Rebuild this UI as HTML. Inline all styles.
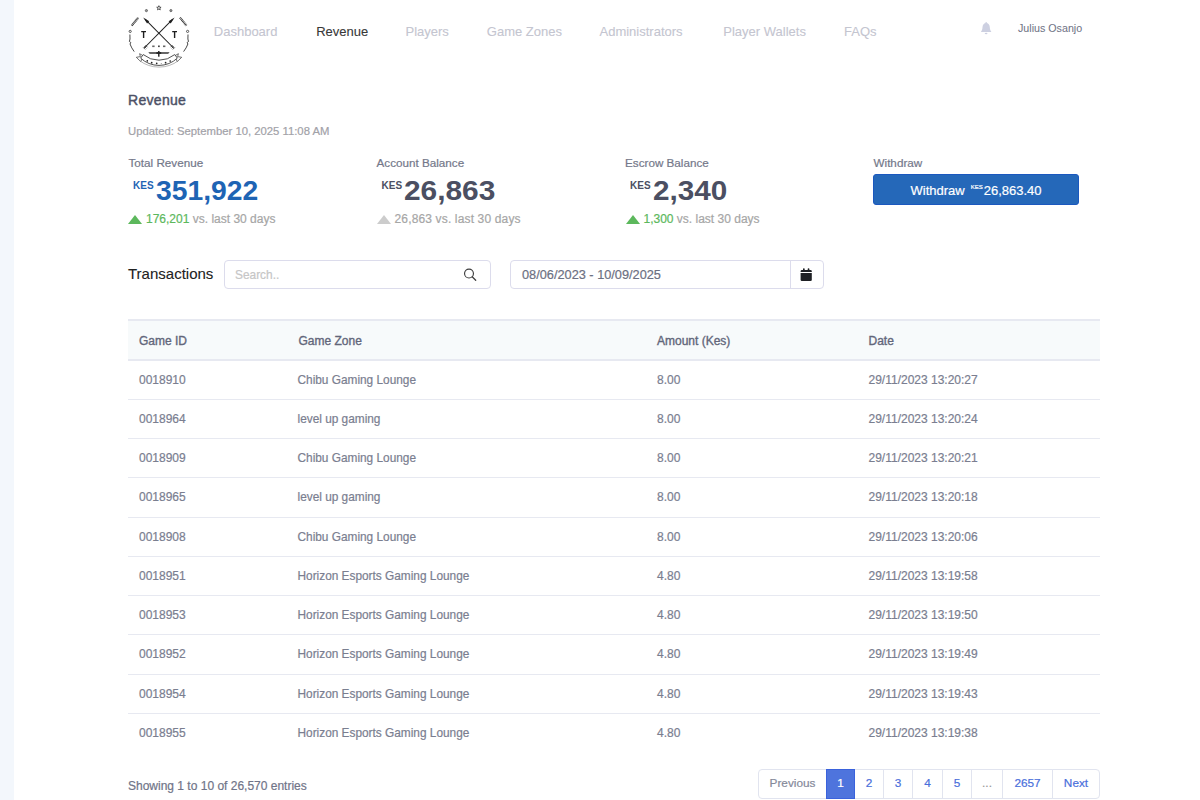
<!DOCTYPE html>
<html><head><meta charset="utf-8">
<style>
*{margin:0;padding:0;box-sizing:border-box}
html,body{width:1200px;height:800px;overflow:hidden;background:#fff;font-family:"Liberation Sans",sans-serif}
body{-webkit-text-stroke:0.2px currentColor}
.val{-webkit-text-stroke:0}
.abs{position:absolute;white-space:nowrap}
#strip{position:absolute;left:0;top:0;width:14px;height:800px;background:#f3f7fc}
.nav{font-size:13px;color:#c4c5d0;top:22.6px;line-height:18px;-webkit-text-stroke:0.1px currentColor}
.nav.on{color:#383838}
#user{-webkit-text-stroke:0.05px currentColor;font-size:10.7px;color:#707486;top:21px;left:1018px;line-height:14px}
h1{position:absolute;left:128px;top:90.8px;font-size:14px;letter-spacing:0.3px;font-weight:normal;-webkit-text-stroke:0.45px currentColor;color:#4d5166;line-height:18px}
#upd{left:128px;top:124px;font-size:11.3px;color:#a2a2a8;line-height:14px}
.lbl{font-size:11.7px;color:#74788a;top:156px;line-height:14px}
.val{top:173.5px;line-height:34px;font-weight:bold;color:#4b4f62;font-size:27px}
.num{display:inline-block;transform-origin:0 50%}
.val sup{font-size:10px;letter-spacing:0;vertical-align:top;position:relative;top:-4.5px;margin-right:2px}
.blue{color:#1e64b4}
.chg{top:211px;font-size:12px;line-height:16px;color:#a6a6a6}
.chg .g{color:#5cb85c}
.tri{display:inline-block;width:0;height:0;border-left:7px solid transparent;border-right:7px solid transparent;border-bottom:9px solid #5cb85c;margin-right:4px;vertical-align:-1px}
.tri.gr{border-bottom-color:#cccccc}
#btn{position:absolute;left:873px;top:174.2px;width:206px;height:31px;background:#2568b9;border:1px solid #1b58bf;border-radius:3px;color:#fff;font-size:13px;line-height:29px;padding-top:1px;text-align:center}
#btn small{font-size:6px;vertical-align:top;position:relative;top:-3px;margin:0 1px 0 6px}
#trans{left:128px;top:265px;font-size:15px;color:#222;line-height:18px;-webkit-text-stroke:0.1px currentColor}
.inp{position:absolute;top:260px;height:29px;border:1px solid #dcdcec;border-radius:4px;background:#fff}
#search{left:224px;width:267px}
#search span{position:absolute;left:10px;top:6px;font-size:11.9px;color:#c6c6c6;line-height:16px}
#date{left:510px;width:314px}
#date span{position:absolute;left:11px;top:6px;font-size:12.75px;color:#6c7082;line-height:16px}
#date .sep{position:absolute;left:279px;top:0;width:1px;height:27px;background:#dcdcec}
table{position:absolute;left:128px;top:319px;width:972px;border-collapse:collapse;font-size:12px}
th{background:#f7fafb;color:#62667a;font-weight:normal;-webkit-text-stroke:0.35px currentColor;text-align:left;height:40px;padding:1px 0 0 11px;border-top:2px solid #e7e9f1;border-bottom:2px solid #e7e9f1;font-size:12px}
td{color:#7a7e90;height:39.25px;padding:0 0 0 11px;border-bottom:1px solid #e7e9f1}
tr:last-child td{border-bottom:1px solid transparent}
td:nth-child(2){padding-left:10px;font-size:11.85px}
#show{left:128px;top:778px;font-size:12px;color:#707488;line-height:16px}
.pg{position:absolute;top:769px;height:30px;border:1px solid #e1e4ef;text-align:center;line-height:27px;font-size:11.8px;color:#4a6fdb;background:#fff}
.pg.prev{color:#858a9a;border-radius:4px 0 0 4px}
.pg.nxt{border-radius:0 4px 4px 0}
.pg.dots{color:#999}
.pg.act{background:#4e74dd;border-color:#3a62dc;color:#fff;z-index:2}
</style></head><body>
<div id="strip"></div>

<svg class="abs" style="left:125px;top:2px" width="70" height="70" viewBox="0 0 70 70">
 <g stroke="#1e1e1e" fill="none" stroke-width="1.05">
  <line x1="20" y1="17.2" x2="48.6" y2="46"/>
  <line x1="47.8" y1="17.2" x2="19.2" y2="46"/>
 </g>
 <g fill="#1e1e1e">
  <path d="M18.2 15.4 L24.2 19.3 L22.1 21.4 Z"/>
  <path d="M49.6 15.4 L43.6 19.3 L45.7 21.4 Z"/>
  <path d="M16.2 28.9 H21 V30.2 H19.3 V35.9 H17.9 V30.2 H16.2 Z"/>
  <path d="M47.2 28.9 H52 V30.2 H50.3 V35.9 H48.9 V30.2 H47.2 Z"/>
  <rect x="27.2" y="43.5" width="2.4" height="1.6" fill="#666"/>
  <rect x="33.1" y="43.5" width="1.6" height="1.6" fill="#333"/>
  <rect x="38" y="43.5" width="2.4" height="1.6" fill="#666"/>
  <path d="M23.3 50.1 L44.6 50.1 L43.2 52 L24.7 52 Z" fill="#666"/>
  <rect x="33.1" y="49" width="1.4" height="5.7"/>
  <rect x="31.4" y="50.2" width="4.8" height="1.6"/>
 </g>
 <g fill="none" stroke="#333">
  <path d="M33.90 3.70 L34.49 5.19 L36.09 5.29 L34.85 6.31 L35.25 7.86 L33.90 7.00 L32.55 7.86 L32.95 6.31 L31.71 5.29 L33.31 5.19 Z" stroke-width="0.8" stroke="#333" fill="#fff"/>
  <circle cx="21.4" cy="8.6" r="1.1" stroke="#555" stroke-width="0.8" fill="#999"/>
  <circle cx="45.9" cy="8.6" r="1.1" stroke="#555" stroke-width="0.8" fill="#999"/>
  <path d="M20.40 43.20 L22.40 45.20 M19.30 44.30 L21.30 46.30 M18.20 45.40 L20.20 47.40" stroke-width="0.75" stroke="#222"/>
  <path d="M45.60 45.20 L47.60 43.20 M46.70 46.30 L48.70 44.30 M47.80 47.40 L49.80 45.40" stroke-width="0.75" stroke="#222"/>
  <path d="M6.8 23.6 L13.2 15.6" stroke-width="2.2" stroke-dasharray="0.9 0.5" stroke="#333"/>
  <path d="M55 15.6 L61.4 23.6" stroke-width="2.2" stroke-dasharray="0.9 0.5" stroke="#333"/>
  <circle cx="5.2" cy="29.4" r="1.1" stroke-width="0.8"/>
  <circle cx="62.6" cy="29.4" r="1.1" stroke-width="0.8"/>
  <path d="M4.9 32.5 L5 37 L4.4 39.5 L5.8 40.5 L5 42 Q 6.5 46 9.2 49.6" stroke-width="0.9"/>
  <path d="M63 32.5 L62.9 37 L63.5 39.5 L62.1 40.5 L62.9 42 Q 61.4 46 58.6 49.6" stroke-width="0.9"/>
 </g>
 <g stroke="#333" stroke-width="0.85" fill="#fff">
  <path d="M17.6 53.4 L14.6 51.7 L15.4 54.6 L11.3 55.3 L15.8 59.7 L16.6 57.6 Z" stroke-width="0.7"/>
  <path d="M50.4 53.4 L53.4 51.7 L52.6 54.6 L56.7 55.3 L52.2 59.7 L51.4 57.6 Z" stroke-width="0.7"/>
  <path d="M18.3 52.6 A24.8 24.8 0 0 0 49.7 52.6 L52.4 56.1 A26.8 26.8 0 0 1 15.6 56.1 Z"/>
  <path d="M14.5 58.6 A32.5 32.5 0 0 0 53.5 58.6" fill="none" stroke-width="0.7" stroke="#999"/>
 </g>
 <g fill="#222">
  <circle cx="22.3" cy="58.8" r="0.85"/>
  <circle cx="26.7" cy="60.7" r="0.85"/>
  <circle cx="31.7" cy="61.3" r="0.85"/>
  <circle cx="36.25" cy="61.5" r="0.5" fill="#777"/>
  <circle cx="40.6" cy="60.7" r="0.85"/>
  <circle cx="45.2" cy="59" r="0.85"/>
 </g>
</svg>

<div class="abs nav" style="left:213.8px">Dashboard</div>
<div class="abs nav on" style="left:316.2px">Revenue</div>
<div class="abs nav" style="left:405.5px">Players</div>
<div class="abs nav" style="left:486.8px">Game Zones</div>
<div class="abs nav" style="left:599.5px">Administrators</div>
<div class="abs nav" style="left:723.3px">Player Wallets</div>
<div class="abs nav" style="left:844px">FAQs</div>

<svg class="abs" style="left:980px;top:22px" width="13" height="14" viewBox="0 0 13 14">
 <path d="M6.15 0.9 C4 0.9 2.6 2.7 2.5 5.2 C2.4 7.4 1.9 8.5 1.1 9.5 L1.1 10.1 L11.2 10.1 L11.2 9.5 C10.4 8.5 9.9 7.4 9.8 5.2 C9.7 2.7 8.3 0.9 6.15 0.9 Z" fill="#cdd0e1"/>
 <circle cx="6.15" cy="0.9" r="0.8" fill="#cdd0e1"/>
 <ellipse cx="6.1" cy="11.4" rx="1.4" ry="0.75" fill="#cdd0e1"/>
</svg>
<div class="abs" id="user">Julius Osanjo</div>

<h1>Revenue</h1>
<div class="abs" id="upd">Updated: September 10, 2025 11:08 AM</div>

<div class="abs lbl" style="left:128.5px">Total Revenue</div>
<div class="abs val blue" style="left:133px"><sup>KES</sup><span class="num" style="transform:scaleX(1.047)">351,922</span></div>
<div class="abs chg" style="left:128px"><span class="tri"></span><span class="g">176,201</span> vs. last 30 days</div>

<div class="abs lbl" style="left:376.5px">Account Balance</div>
<div class="abs val" style="left:381.5px"><sup>KES</sup><span class="num" style="transform:scaleX(1.106)">26,863</span></div>
<div class="abs chg" style="left:376.5px;letter-spacing:0.15px"><span class="tri gr"></span>26,863 vs. last 30 days</div>

<div class="abs lbl" style="left:625px">Escrow Balance</div>
<div class="abs val" style="left:630px"><sup>KES</sup><span class="num" style="transform:scaleX(1.10)">2,340</span></div>
<div class="abs chg" style="left:625.5px"><span class="tri"></span><span class="g">1,300</span> vs. last 30 days</div>

<div class="abs lbl" style="left:873.5px">Withdraw</div>
<div id="btn">Withdraw<small>KES</small>26,863.40</div>

<div class="abs" id="trans">Transactions</div>
<div class="inp" id="search"><span>Search..</span>
 <svg style="position:absolute;left:239px;top:7px" width="14" height="14" viewBox="0 0 14 14"><circle cx="5.0" cy="5.5" r="4.45" fill="none" stroke="#3f3f3f" stroke-width="1.15"/><line x1="8.2" y1="8.7" x2="11.7" y2="12.2" stroke="#3f3f3f" stroke-width="1.3" stroke-linecap="round"/></svg>
</div>
<div class="inp" id="date"><span>08/06/2023 - 10/09/2025</span><div class="sep"></div>
 <svg style="position:absolute;left:289px;top:7px" width="13" height="14" viewBox="0 0 13 14"><path d="M0.6 3.3 Q0.6 2 1.9 2 H10.5 Q11.8 2 11.8 3.3 V4 H0.6 Z" fill="#1e2024"/><rect x="3" y="0.2" width="1.7" height="2.8" rx="0.8" fill="#1e2024"/><rect x="7.7" y="0.2" width="1.7" height="2.8" rx="0.8" fill="#1e2024"/><path d="M0.6 5.1 H11.8 V11.8 Q11.8 13 10.6 13 H1.8 Q0.6 13 0.6 11.8 Z" fill="#1e2024"/></svg>
</div>

<table>
<colgroup><col style="width:159.5px"><col style="width:358.5px"><col style="width:211.5px"><col style="width:242.5px"></colgroup>
<thead><tr><th>Game ID</th><th>Game Zone</th><th>Amount (Kes)</th><th>Date</th></tr></thead>
<tbody>
<tr><td>0018910</td><td>Chibu Gaming Lounge</td><td>8.00</td><td>29/11/2023 13:20:27</td></tr>
<tr><td>0018964</td><td>level up gaming</td><td>8.00</td><td>29/11/2023 13:20:24</td></tr>
<tr><td>0018909</td><td>Chibu Gaming Lounge</td><td>8.00</td><td>29/11/2023 13:20:21</td></tr>
<tr><td>0018965</td><td>level up gaming</td><td>8.00</td><td>29/11/2023 13:20:18</td></tr>
<tr><td>0018908</td><td>Chibu Gaming Lounge</td><td>8.00</td><td>29/11/2023 13:20:06</td></tr>
<tr><td>0018951</td><td>Horizon Esports Gaming Lounge</td><td>4.80</td><td>29/11/2023 13:19:58</td></tr>
<tr><td>0018953</td><td>Horizon Esports Gaming Lounge</td><td>4.80</td><td>29/11/2023 13:19:50</td></tr>
<tr><td>0018952</td><td>Horizon Esports Gaming Lounge</td><td>4.80</td><td>29/11/2023 13:19:49</td></tr>
<tr><td>0018954</td><td>Horizon Esports Gaming Lounge</td><td>4.80</td><td>29/11/2023 13:19:43</td></tr>
<tr><td>0018955</td><td>Horizon Esports Gaming Lounge</td><td>4.80</td><td>29/11/2023 13:19:38</td></tr>
</tbody></table>

<div class="abs" id="show">Showing 1 to 10 of 26,570 entries</div>
<div class="pg prev" style="left:758px;width:69px">Previous</div>
<div class="pg act" style="left:826px;width:29px">1</div>
<div class="pg" style="left:854px;width:30px">2</div>
<div class="pg" style="left:883px;width:30px">3</div>
<div class="pg" style="left:912px;width:31px">4</div>
<div class="pg" style="left:942px;width:30px">5</div>
<div class="pg dots" style="left:971px;width:32px">...</div>
<div class="pg" style="left:1002px;width:51px">2657</div>
<div class="pg nxt" style="left:1052px;width:48px">Next</div>
</body></html>
